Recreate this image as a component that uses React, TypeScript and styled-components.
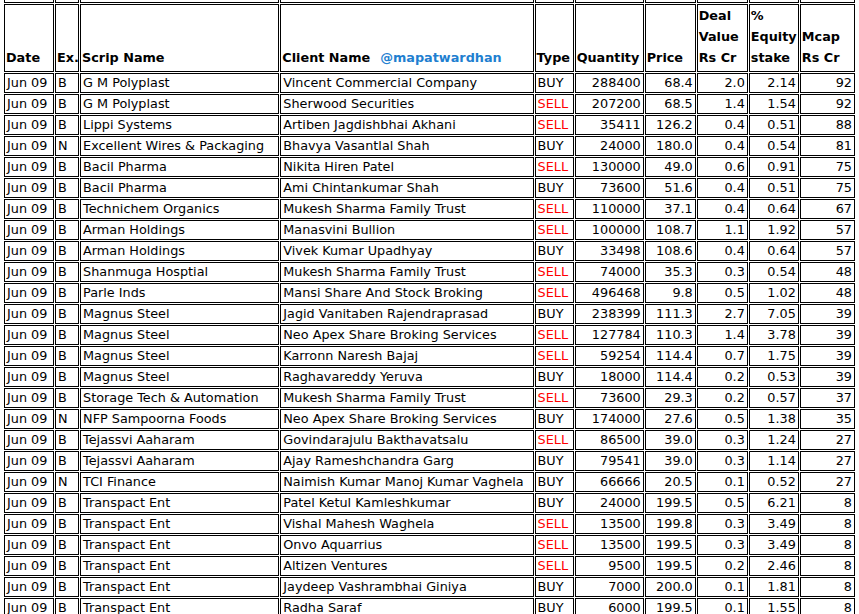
import React from "react";
import styled, { createGlobalStyle } from "styled-components";

const Global = createGlobalStyle`
  html, body { margin: 0; background: #fff; overflow: hidden; }
`;

type Deal = [string, string, string, string, "BUY" | "SELL", number, string, string, string, number];

const deals: Deal[] = [
  ["Jun 09", "B", "G M Polyplast", "Vincent Commercial Company", "BUY", 288400, "68.4", "2.0", "2.14", 92],
  ["Jun 09", "B", "G M Polyplast", "Sherwood Securities", "SELL", 207200, "68.5", "1.4", "1.54", 92],
  ["Jun 09", "B", "Lippi Systems", "Artiben Jagdishbhai Akhani", "SELL", 35411, "126.2", "0.4", "0.51", 88],
  ["Jun 09", "N", "Excellent Wires & Packaging", "Bhavya Vasantlal Shah", "BUY", 24000, "180.0", "0.4", "0.54", 81],
  ["Jun 09", "B", "Bacil Pharma", "Nikita Hiren Patel", "SELL", 130000, "49.0", "0.6", "0.91", 75],
  ["Jun 09", "B", "Bacil Pharma", "Ami Chintankumar Shah", "BUY", 73600, "51.6", "0.4", "0.51", 75],
  ["Jun 09", "B", "Technichem Organics", "Mukesh Sharma Family Trust", "SELL", 110000, "37.1", "0.4", "0.64", 67],
  ["Jun 09", "B", "Arman Holdings", "Manasvini Bullion", "SELL", 100000, "108.7", "1.1", "1.92", 57],
  ["Jun 09", "B", "Arman Holdings", "Vivek Kumar Upadhyay", "BUY", 33498, "108.6", "0.4", "0.64", 57],
  ["Jun 09", "B", "Shanmuga Hosptial", "Mukesh Sharma Family Trust", "SELL", 74000, "35.3", "0.3", "0.54", 48],
  ["Jun 09", "B", "Parle Inds", "Mansi Share And Stock Broking", "SELL", 496468, "9.8", "0.5", "1.02", 48],
  ["Jun 09", "B", "Magnus Steel", "Jagid Vanitaben Rajendraprasad", "BUY", 238399, "111.3", "2.7", "7.05", 39],
  ["Jun 09", "B", "Magnus Steel", "Neo Apex Share Broking Services", "SELL", 127784, "110.3", "1.4", "3.78", 39],
  ["Jun 09", "B", "Magnus Steel", "Karronn Naresh Bajaj", "SELL", 59254, "114.4", "0.7", "1.75", 39],
  ["Jun 09", "B", "Magnus Steel", "Raghavareddy Yeruva", "BUY", 18000, "114.4", "0.2", "0.53", 39],
  ["Jun 09", "B", "Storage Tech & Automation", "Mukesh Sharma Family Trust", "SELL", 73600, "29.3", "0.2", "0.57", 37],
  ["Jun 09", "N", "NFP Sampoorna Foods", "Neo Apex Share Broking Services", "BUY", 174000, "27.6", "0.5", "1.38", 35],
  ["Jun 09", "B", "Tejassvi Aaharam", "Govindarajulu Bakthavatsalu", "SELL", 86500, "39.0", "0.3", "1.24", 27],
  ["Jun 09", "B", "Tejassvi Aaharam", "Ajay Rameshchandra Garg", "BUY", 79541, "39.0", "0.3", "1.14", 27],
  ["Jun 09", "N", "TCI Finance", "Naimish Kumar Manoj Kumar Vaghela", "BUY", 66666, "20.5", "0.1", "0.52", 27],
  ["Jun 09", "B", "Transpact Ent", "Patel Ketul Kamleshkumar", "BUY", 24000, "199.5", "0.5", "6.21", 8],
  ["Jun 09", "B", "Transpact Ent", "Vishal Mahesh Waghela", "SELL", 13500, "199.8", "0.3", "3.49", 8],
  ["Jun 09", "B", "Transpact Ent", "Onvo Aquarrius", "SELL", 13500, "199.5", "0.3", "3.49", 8],
  ["Jun 09", "B", "Transpact Ent", "Altizen Ventures", "SELL", 9500, "199.5", "0.2", "2.46", 8],
  ["Jun 09", "B", "Transpact Ent", "Jaydeep Vashrambhai Giniya", "BUY", 7000, "200.0", "0.1", "1.81", 8],
  ["Jun 09", "B", "Transpact Ent", "Radha Saraf", "BUY", 6000, "199.5", "0.1", "1.55", 8],
];

const widths = [50, 24, 199, 253, 39, 69, 51, 51, 50, 55];

const Sheet = styled.table`
  margin: -18px 0 0 3px;
  border-collapse: separate;
  border-spacing: 1px;
  table-layout: fixed;
  width: 853px;
  font-family: "DejaVu Sans", Tahoma, sans-serif;
  font-size: 12.8px;
  color: #000;
`;

const Cell = styled.td<{ $right?: boolean; $color?: string }>`
  border: 1px solid #000;
  height: 20px;
  padding: 0 2px 0 2px;
  line-height: 18px;
  white-space: nowrap;
  overflow: hidden;
  text-align: ${(p) => (p.$right ? "right" : "left")};
  color: ${(p) => p.$color || "#000"};
  box-sizing: border-box;
`;

const Head = styled.th`
  border: 1px solid #000;
  height: 61px;
  padding: 0 1px 3px;
  text-align: left;
  vertical-align: bottom;
  font-weight: bold;
  line-height: 21px;
  white-space: nowrap;
  overflow: hidden;
  box-sizing: border-box;
`;

const Handle = styled.span`
  color: #1f7fd0;
  margin-left: 10px;
`;

export default function App() {
  return (
    <>
      <Global />
      <Sheet>
        <colgroup>
          {widths.map((w, i) => (
            <col key={i} style={{ width: w }} />
          ))}
        </colgroup>
        <tbody>
          <tr>
            {widths.map((_, i) => (
              <Cell key={i} />
            ))}
          </tr>
          <tr>
            <Head>Date</Head>
            <Head>Ex.</Head>
            <Head>Scrip Name</Head>
            <Head>
              Client Name<Handle>@mapatwardhan</Handle>
            </Head>
            <Head>Type</Head>
            <Head>Quantity</Head>
            <Head>Price</Head>
            <Head>
              Deal<br />Value<br />Rs Cr
            </Head>
            <Head>
              %<br />Equity<br />stake
            </Head>
            <Head>
              Mcap<br />Rs Cr
            </Head>
          </tr>
          {deals.map((d, i) => (
            <tr key={i}>
              <Cell>{d[0]}</Cell>
              <Cell>{d[1]}</Cell>
              <Cell>{d[2]}</Cell>
              <Cell>{d[3]}</Cell>
              <Cell $color={d[4] === "SELL" ? "#ff0000" : "#000"}>{d[4]}</Cell>
              <Cell $right>{d[5]}</Cell>
              <Cell $right>{d[6]}</Cell>
              <Cell $right>{d[7]}</Cell>
              <Cell $right>{d[8]}</Cell>
              <Cell $right>{d[9]}</Cell>
            </tr>
          ))}
        </tbody>
      </Sheet>
    </>
  );
}
